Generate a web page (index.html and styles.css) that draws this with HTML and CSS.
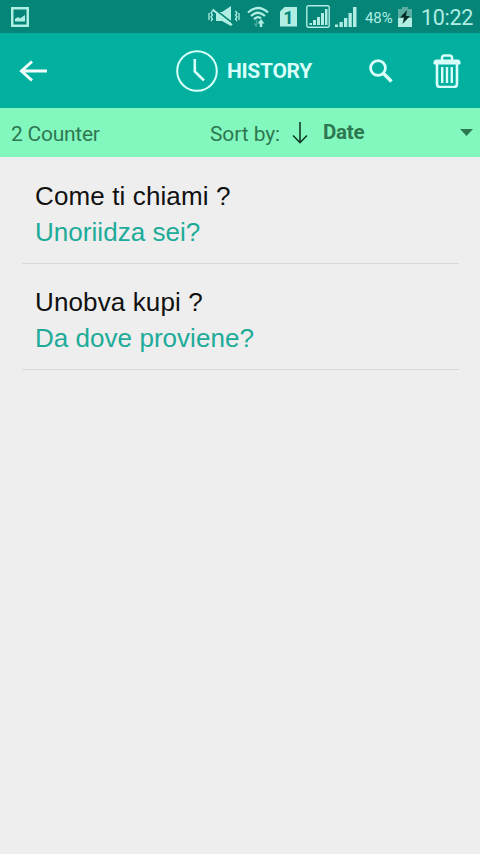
FILE: index.html
```html
<!DOCTYPE html>
<html lang="it">
<head>
<meta charset="utf-8">
<title>History</title>
<link rel="stylesheet" href="styles.css">
</head>
<body>
<div class="status">
  <svg class="picture" width="18" height="20" viewBox="0 0 18 20"><rect x="1.25" y="1.25" width="15.5" height="17.5" fill="none" stroke="currentColor" stroke-width="2.500"/><path d="M4 14.500V12l3-2 2 1.500L14 8v6.500Z" fill="currentColor"/></svg>
  <svg class="mute" width="32" height="22" viewBox="0 0 32 22"><path d="M8 6h6l9-6v20l-9-5H8Z" fill="currentColor"/><path d="M5.500 2.500 25 17.500" stroke="#058577" stroke-width="2"/><path d="M4.500 3.500 24 19" stroke="currentColor" stroke-width="2.200"/><path d="M4.500 5 3 7l1.500 2L3 11l1.500 2L3 15M1 7v7M27.500 5 29 7l-1.500 2 1.500 2-1.500 2 1.500 2M31 7v7" fill="none" stroke="currentColor" stroke-width="1.300"/></svg>
  <svg class="wifi" width="22" height="22" viewBox="0 0 22 22" fill="none" stroke="currentColor"><path d="M1 6.500Q11-2.500 21 6.500M4 10Q11 3.500 18 10M7 13.200Q11 9.500 14 12.500" stroke-width="2.300"/><path d="M9.500 14v6M7.500 17.500l2 3" stroke-width="1.500" opacity=".35"/><path d="M14 21v-5" stroke-width="2.500"/><path d="m10.500 17.500 3.500-4.500 3.500 4.500Z" fill="currentColor" stroke="none"/></svg>
  <span class="sim"><b>1</b></span>
  <svg class="signal-box" width="24" height="23" viewBox="0 0 24 23"><rect x=".8" y=".8" width="22.400" height="21.400" rx="1.500" fill="none" stroke="currentColor" stroke-width="1.400"/><path d="M3.500 20v-2H6v2ZM7 20v-5h3v5ZM11 20v-8h3v8ZM15 20V8h3v12ZM19 20V4h2.500v16Z" fill="currentColor"/></svg>
  <svg class="signal" width="22" height="22" viewBox="0 0 22 22"><path d="M0 21v-2.500h3V21ZM4.500 21v-5h3.300v5ZM9 21v-9h3.300v9ZM13.500 21V7h3.300v14ZM18 21V1h3.500v20Z" fill="currentColor"/></svg>
  <span class="percent">48%</span>
  <svg class="battery" width="14" height="20" viewBox="0 0 14 20"><path d="M4 0h6v2h4v9H0V2h4Z" fill="#5aaea2"/><path d="M0 11h14v9H0Z" fill="currentColor"/><path d="m9 3-7 7.500h4L4.500 17 12 9H8Z" fill="#082e28"/></svg>
  <span class="time">10:22</span>
</div>
<header class="bar">
  <svg class="back" width="28" height="22" viewBox="0 0 28 22" fill="none" stroke="currentColor" stroke-width="3"><path d="M2 11h26M13 1.500 2.500 11 13 20.500"/></svg>
  <svg class="clock" width="42" height="42" viewBox="0 0 42 42" fill="none" stroke="currentColor"><circle cx="21" cy="21" r="19.800" stroke-width="2"/><path d="M18.800 9v12.500l9.200 9" stroke-width="2.600"/></svg>
  <h1>HISTORY</h1>
  <svg class="search" width="24" height="24" viewBox="0 0 24 24" fill="none" stroke="currentColor"><circle cx="9" cy="9" r="7.400" stroke-width="2.800"/><path d="m14.500 14.500 8 8" stroke-width="3.600"/></svg>
  <svg class="trash" width="28" height="34" viewBox="0 0 28 34" fill="none" stroke="currentColor"><path d="M9 6V4q0-2.500 2.500-2.500h5Q19 1.500 19 4v2" stroke-width="2.500"/><path d="M1 10V8q0-2 2-2h22q2 0 2 2v2Z" fill="currentColor" stroke-width="1"/><path d="M4 10v20q0 3 3 3h14q3 0 3-3V10" stroke-width="2.600"/><path d="M9.200 13v16M14 13v16M18.800 13v16" stroke-width="2.400"/></svg>
</header>
<div class="sort">
  <span class="count">2 Counter</span>
  <span class="label">Sort by:</span>
  <svg class="down" width="16" height="22" viewBox="0 0 16 22" fill="none" stroke="#153d2a" stroke-width="1.600"><path d="M8 0v20M1 13.500l7 7 7-7"/></svg>
  <span class="date">Date</span>
  <svg class="caret" width="13" height="7" viewBox="0 0 13 7"><path d="M0 0h13L6.500 7Z" fill="#2d7850"/></svg>
</div>
<main>
  <article><p>Come ti chiami ?</p><p class="answer">Unoriidza sei?</p></article>
  <article><p>Unobva kupi ?</p><p class="answer">Da dove proviene?</p></article>
</main>
</body>
</html>
```
FILE: styles.css
```css
* { box-sizing: border-box; }
body { margin: 0; min-height: 854px; background: #eee; font-family: Roboto, sans-serif; }
svg { display: block; flex: none; }
span, h1 { white-space: nowrap; flex: none; }
.status { display: flex; align-items: center; height: 33px; background: #058577; color: #b0eee4; }
.picture { margin-left: 11px; }
.mute { margin-left: 179px; }
.wifi { margin-left: 7px; }
.sim { width: 17px; height: 20px; margin-left: 11px; background: #b0eee4; color: #058577; clip-path: polygon(5px 0, 100% 0, 100% 100%, 0 100%, 0 5px); font-size: 18px; line-height: 21px; text-align: center; }
.signal-box { margin-left: 9px; }
.signal { margin-left: 5px; }
.percent { width: 28px; margin-left: 8px; font-size: 15px; letter-spacing: -.1px; padding-top: 2px; }
.battery { margin-left: 5px; }
.time { margin-left: 9px; font-size: 21.500px; letter-spacing: -.3px; padding-top: 2px; }
.bar { display: flex; align-items: center; height: 75px; background: #02b09f; color: #d8fffa; }
.back { margin-left: 19px; color: #f2fffd; }
.clock { margin-left: 129px; }
h1 { width: 87px; margin: 1px 0 0 9px; font-size: 21px; line-height: 26px; font-weight: 700; letter-spacing: -.3px; }
.search { margin-left: 55px; }
.trash { margin-left: 40px; }
.sort { display: flex; align-items: center; height: 49px; background: #83f8be; color: #2d7850; font-size: 21px; letter-spacing: -.25px; }
.count { width: 100px; margin-left: 11px; padding-top: 2px; }
.label { width: 72px; margin-left: 99px; padding-top: 2px; letter-spacing: -.1px; }
.down { margin-left: 10px; }
.date { width: 50px; margin: -2px 0 0 15px; font-size: 20.500px; font-weight: 700; }
.caret { margin-left: 87px; }
main { padding: 1px 21px 0 22px; }
article { height: 106px; padding: 20px 0 0 13px; border-bottom: 1px solid #d8d8d8; font: 26px/36px "Liberation Sans", Arial, sans-serif; letter-spacing: .12px; color: #111; }
p { margin: 0; white-space: nowrap; }
.answer { color: #20ab99; letter-spacing: .04px; }
```
